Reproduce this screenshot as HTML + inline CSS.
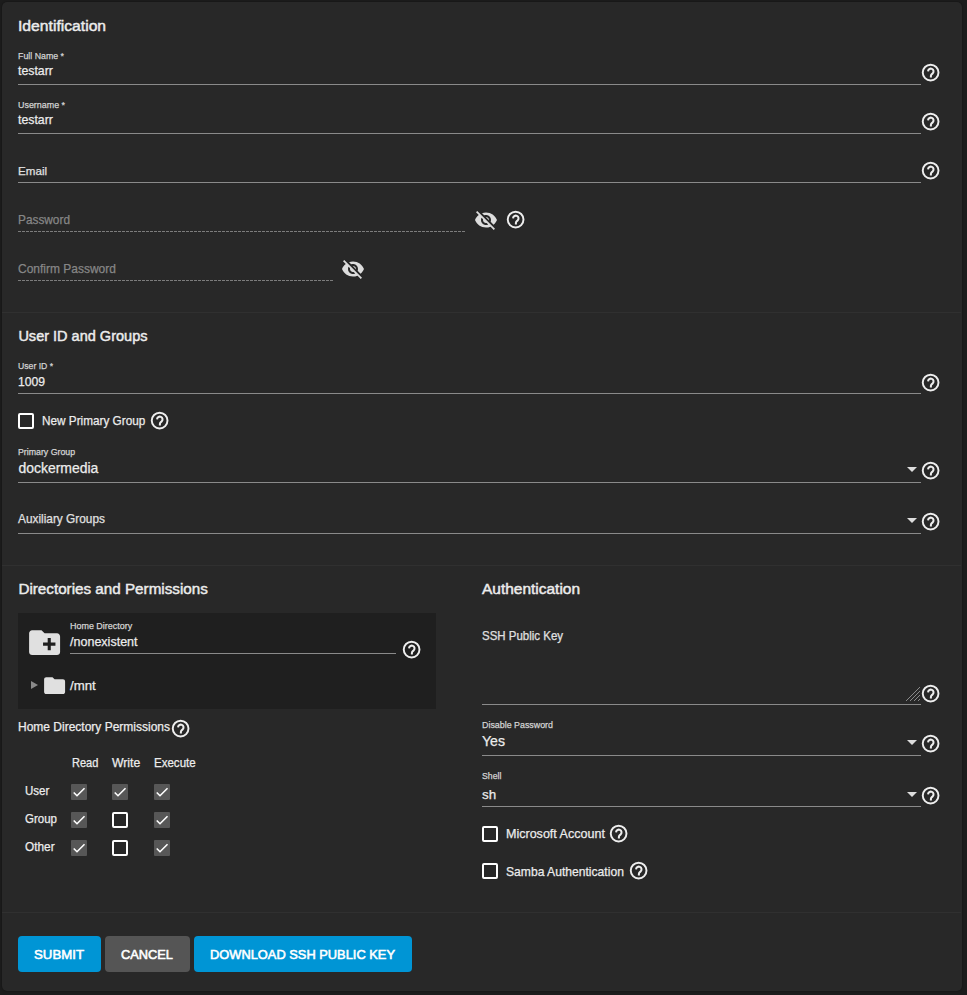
<!DOCTYPE html>
<html><head><meta charset="utf-8"><title>Add User</title>
<style>
html,body{margin:0;padding:0;}
body{width:967px;height:995px;background:#1c1c1c;position:relative;overflow:hidden;font-family:"Liberation Sans",sans-serif;}
.card{position:absolute;left:2px;top:2px;width:960px;height:989px;background:#282828;border-radius:5px;box-shadow:0 0 2px rgba(0,0,0,.5);}
.t{position:absolute;white-space:nowrap;line-height:1;transform-origin:0 0;}
.r{position:absolute;}
</style></head><body>
<div class="card"></div>
<div class="t" style="left:18.40px;top:18.11px;font-size:15.22px;color:#ececec;-webkit-text-stroke:0.45px currentColor;transform:scaleX(1.0310);">Identification</div>
<div class="t" style="left:18.40px;top:50.72px;font-size:9.78px;color:#d4d4d4;-webkit-text-stroke:0.25px currentColor;transform:scaleX(0.9028);">Full Name *</div>
<div class="t" style="left:18.20px;top:64.22px;font-size:13.68px;color:#ececec;-webkit-text-stroke:0.25px currentColor;transform:scaleX(0.8992);">testarr</div>
<div class="r" style="left:18px;top:84px;width:903px;height:1px;background:#8a8a8a;"></div>
<svg class="r" style="left:920.48px;top:62.43px;width:21.24px;height:21.24px" viewBox="0 0 24 24"><g fill="none" stroke="#eee"><circle cx="12" cy="12" r="8.9" stroke-width="2.2"/><path d="M9.1 10.6A3.1 3.1 0 1 1 14.3 12.9C13.1 13.9 12.3 14.4 12.3 15.9V17.6" stroke-width="2.3"/></g></svg>
<div class="t" style="left:18.40px;top:99.72px;font-size:9.78px;color:#d4d4d4;-webkit-text-stroke:0.25px currentColor;transform:scaleX(0.9126);">Username *</div>
<div class="t" style="left:18.20px;top:113.42px;font-size:13.68px;color:#ececec;-webkit-text-stroke:0.25px currentColor;transform:scaleX(0.8992);">testarr</div>
<div class="r" style="left:18px;top:133px;width:903px;height:1px;background:#8a8a8a;"></div>
<svg class="r" style="left:920.48px;top:111.43px;width:21.24px;height:21.24px" viewBox="0 0 24 24"><g fill="none" stroke="#eee"><circle cx="12" cy="12" r="8.9" stroke-width="2.2"/><path d="M9.1 10.6A3.1 3.1 0 1 1 14.3 12.9C13.1 13.9 12.3 14.4 12.3 15.9V17.6" stroke-width="2.3"/></g></svg>
<div class="t" style="left:18.40px;top:165.07px;font-size:11.73px;color:#e0e0e0;-webkit-text-stroke:0.25px currentColor;transform:scaleX(0.9915);">Email</div>
<div class="r" style="left:18px;top:182px;width:903px;height:1px;background:#8a8a8a;"></div>
<svg class="r" style="left:920.48px;top:160.43px;width:21.24px;height:21.24px" viewBox="0 0 24 24"><g fill="none" stroke="#eee"><circle cx="12" cy="12" r="8.9" stroke-width="2.2"/><path d="M9.1 10.6A3.1 3.1 0 1 1 14.3 12.9C13.1 13.9 12.3 14.4 12.3 15.9V17.6" stroke-width="2.3"/></g></svg>
<div class="t" style="left:18.40px;top:213.51px;font-size:12.15px;color:#868686;-webkit-text-stroke:0.25px currentColor;transform:scaleX(0.9747);">Password</div>
<div class="r" style="left:18px;top:231px;width:448px;height:1px;background:repeating-linear-gradient(to right,#7c7c7c 0 3px,transparent 3px 4px);"></div>
<svg class="r" style="left:473.70px;top:207.90px;width:24.00px;height:24.00px" viewBox="0 0 24 24"><path fill="#ddd" d="M12 7c2.76 0 5 2.24 5 5 0 .65-.13 1.26-.36 1.83l2.92 2.92c1.51-1.26 2.7-2.89 3.43-4.75-1.73-4.39-6-7.5-10.99-7.5-1.4 0-2.74.25-3.98.7l2.16 2.16C10.74 7.13 11.35 7 12 7zM2 4.27l2.28 2.28.46.46C3.08 8.3 1.78 10.02 1 12c1.73 4.39 6 7.5 11 7.5 1.55 0 3.03-.3 4.38-.84l.42.42L19.73 22 21 20.73 3.27 3 2 4.27zM7.53 9.8l1.55 1.55c-.05.21-.08.43-.08.65 0 1.66 1.34 3 3 3 .22 0 .44-.03.65-.08l1.55 1.55c-.67.33-1.41.53-2.2.53-2.76 0-5-2.24-5-5 0-.79.2-1.53.53-2.2zm4.31-.78l3.15 3.15.02-.16c0-1.66-1.34-3-3-3l-.17.01z"/></svg>
<svg class="r" style="left:505.48px;top:209.43px;width:21.24px;height:21.24px" viewBox="0 0 24 24"><g fill="none" stroke="#eee"><circle cx="12" cy="12" r="8.9" stroke-width="2.2"/><path d="M9.1 10.6A3.1 3.1 0 1 1 14.3 12.9C13.1 13.9 12.3 14.4 12.3 15.9V17.6" stroke-width="2.3"/></g></svg>
<div class="t" style="left:18.40px;top:262.71px;font-size:12.15px;color:#868686;-webkit-text-stroke:0.25px currentColor;transform:scaleX(0.9874);">Confirm Password</div>
<div class="r" style="left:18px;top:280px;width:315px;height:1px;background:repeating-linear-gradient(to right,#7c7c7c 0 3px,transparent 3px 4px);"></div>
<svg class="r" style="left:341.00px;top:257.00px;width:24.00px;height:24.00px" viewBox="0 0 24 24"><path fill="#ddd" d="M12 7c2.76 0 5 2.24 5 5 0 .65-.13 1.26-.36 1.83l2.92 2.92c1.51-1.26 2.7-2.89 3.43-4.75-1.73-4.39-6-7.5-10.99-7.5-1.4 0-2.74.25-3.98.7l2.16 2.16C10.74 7.13 11.35 7 12 7zM2 4.27l2.28 2.28.46.46C3.08 8.3 1.78 10.02 1 12c1.73 4.39 6 7.5 11 7.5 1.55 0 3.03-.3 4.38-.84l.42.42L19.73 22 21 20.73 3.27 3 2 4.27zM7.53 9.8l1.55 1.55c-.05.21-.08.43-.08.65 0 1.66 1.34 3 3 3 .22 0 .44-.03.65-.08l1.55 1.55c-.67.33-1.41.53-2.2.53-2.76 0-5-2.24-5-5 0-.79.2-1.53.53-2.2zm4.31-.78l3.15 3.15.02-.16c0-1.66-1.34-3-3-3l-.17.01z"/></svg>
<div class="r" style="left:2px;top:312px;width:959px;height:1px;background:#303030;"></div>
<div class="t" style="left:18.40px;top:328.80px;font-size:14.53px;color:#ececec;-webkit-text-stroke:0.45px currentColor;">User ID and Groups</div>
<div class="t" style="left:18.40px;top:361.14px;font-size:9.64px;color:#d4d4d4;-webkit-text-stroke:0.25px currentColor;transform:scaleX(0.8986);">User ID *</div>
<div class="t" style="left:18.40px;top:375.10px;font-size:12.99px;color:#ececec;-webkit-text-stroke:0.25px currentColor;transform:scaleX(0.9375);">1009</div>
<div class="r" style="left:18px;top:393px;width:903px;height:1px;background:#8a8a8a;"></div>
<svg class="r" style="left:920.48px;top:372.43px;width:21.24px;height:21.24px" viewBox="0 0 24 24"><g fill="none" stroke="#eee"><circle cx="12" cy="12" r="8.9" stroke-width="2.2"/><path d="M9.1 10.6A3.1 3.1 0 1 1 14.3 12.9C13.1 13.9 12.3 14.4 12.3 15.9V17.6" stroke-width="2.3"/></g></svg>
<div class="r" style="left:18px;top:413px;width:12px;height:12px;border:2px solid #fff;border-radius:2px"></div>
<div class="t" style="left:41.90px;top:414.20px;font-size:12.99px;color:#ececec;-webkit-text-stroke:0.25px currentColor;transform:scaleX(0.9059);">New Primary Group</div>
<svg class="r" style="left:148.88px;top:410.43px;width:21.24px;height:21.24px" viewBox="0 0 24 24"><g fill="none" stroke="#eee"><circle cx="12" cy="12" r="8.9" stroke-width="2.2"/><path d="M9.1 10.6A3.1 3.1 0 1 1 14.3 12.9C13.1 13.9 12.3 14.4 12.3 15.9V17.6" stroke-width="2.3"/></g></svg>
<div class="t" style="left:18.40px;top:447.57px;font-size:8.66px;color:#d4d4d4;-webkit-text-stroke:0.25px currentColor;transform:scaleX(1.0133);">Primary Group</div>
<div class="t" style="left:18.40px;top:461.87px;font-size:13.97px;color:#ececec;-webkit-text-stroke:0.25px currentColor;">dockermedia</div>
<div class="r" style="left:18px;top:482px;width:903px;height:1px;background:#8a8a8a;"></div>
<div class="r" style="left:907px;top:467px;width:0;height:0;border-left:5px solid transparent;border-right:5px solid transparent;border-top:5px solid #ddd"></div>
<svg class="r" style="left:920.48px;top:459.93px;width:21.24px;height:21.24px" viewBox="0 0 24 24"><g fill="none" stroke="#eee"><circle cx="12" cy="12" r="8.9" stroke-width="2.2"/><path d="M9.1 10.6A3.1 3.1 0 1 1 14.3 12.9C13.1 13.9 12.3 14.4 12.3 15.9V17.6" stroke-width="2.3"/></g></svg>
<div class="t" style="left:18.40px;top:513.41px;font-size:12.15px;color:#e0e0e0;-webkit-text-stroke:0.25px currentColor;transform:scaleX(0.9759);">Auxiliary Groups</div>
<div class="r" style="left:18px;top:533px;width:903px;height:1px;background:#8a8a8a;"></div>
<div class="r" style="left:907px;top:518px;width:0;height:0;border-left:5px solid transparent;border-right:5px solid transparent;border-top:5px solid #ddd"></div>
<svg class="r" style="left:920.48px;top:510.93px;width:21.24px;height:21.24px" viewBox="0 0 24 24"><g fill="none" stroke="#eee"><circle cx="12" cy="12" r="8.9" stroke-width="2.2"/><path d="M9.1 10.6A3.1 3.1 0 1 1 14.3 12.9C13.1 13.9 12.3 14.4 12.3 15.9V17.6" stroke-width="2.3"/></g></svg>
<div class="r" style="left:2px;top:565px;width:959px;height:1px;background:#303030;"></div>
<div class="t" style="left:18.40px;top:581.21px;font-size:15.22px;color:#ececec;-webkit-text-stroke:0.45px currentColor;">Directories and Permissions</div>
<div class="r" style="left:18px;top:613px;width:418px;height:96px;background:#1f1f1f;"></div>
<svg class="r" style="left:26.40px;top:624.40px;width:37.20px;height:37.20px" viewBox="0 0 24 24"><path fill="#e0e0e0" d="M20 6h-8l-2-2H4c-1.11 0-1.99.89-1.99 2L2 18c0 1.11.89 2 2 2h16c1.11 0 2-.89 2-2V8c0-1.11-.89-2-2-2zm-1 8h-3v3h-2v-3h-3v-2h3V9h2v3h3v2z"/></svg>
<div class="t" style="left:70.40px;top:621.14px;font-size:9.64px;color:#d4d4d4;-webkit-text-stroke:0.25px currentColor;transform:scaleX(0.9295);">Home Directory</div>
<div class="t" style="left:70.40px;top:634.50px;font-size:12.99px;color:#ececec;-webkit-text-stroke:0.25px currentColor;transform:scaleX(0.9649);">/nonexistent</div>
<div class="r" style="left:70px;top:653px;width:326px;height:1px;background:#8a8a8a;"></div>
<svg class="r" style="left:401.48px;top:639.43px;width:21.24px;height:21.24px" viewBox="0 0 24 24"><g fill="none" stroke="#eee"><circle cx="12" cy="12" r="8.9" stroke-width="2.2"/><path d="M9.1 10.6A3.1 3.1 0 1 1 14.3 12.9C13.1 13.9 12.3 14.4 12.3 15.9V17.6" stroke-width="2.3"/></g></svg>
<div class="r" style="left:31px;top:681px;width:0;height:0;border-top:4px solid transparent;border-bottom:4px solid transparent;border-left:7px solid #8a8a8a"></div>
<svg class="r" style="left:42.30px;top:672.50px;width:25.20px;height:25.20px" viewBox="0 0 24 24"><path fill="#e0e0e0" d="M10 4H4c-1.1 0-1.99.9-1.99 2L2 18c0 1.1.9 2 2 2h16c1.1 0 2-.9 2-2V8c0-1.1-.9-2-2-2h-8l-2-2z"/></svg>
<div class="t" style="left:70.40px;top:678.85px;font-size:13.41px;color:#ececec;-webkit-text-stroke:0.25px currentColor;transform:scaleX(0.9866);">/mnt</div>
<div class="t" style="left:18.20px;top:721.29px;font-size:12.29px;color:#ececec;-webkit-text-stroke:0.25px currentColor;transform:scaleX(0.9768);">Home Directory Permissions</div>
<svg class="r" style="left:169.98px;top:717.93px;width:21.24px;height:21.24px" viewBox="0 0 24 24"><g fill="none" stroke="#eee"><circle cx="12" cy="12" r="8.9" stroke-width="2.2"/><path d="M9.1 10.6A3.1 3.1 0 1 1 14.3 12.9C13.1 13.9 12.3 14.4 12.3 15.9V17.6" stroke-width="2.3"/></g></svg>
<div class="t" style="left:71.50px;top:756.61px;font-size:12.15px;color:#ececec;-webkit-text-stroke:0.25px currentColor;transform:scaleX(0.9088);">Read</div>
<div class="t" style="left:112.00px;top:756.61px;font-size:12.15px;color:#ececec;-webkit-text-stroke:0.25px currentColor;transform:scaleX(1.0053);">Write</div>
<div class="t" style="left:154.40px;top:756.61px;font-size:12.15px;color:#ececec;-webkit-text-stroke:0.25px currentColor;transform:scaleX(0.9499);">Execute</div>
<div class="t" style="left:24.80px;top:784.81px;font-size:12.15px;color:#ececec;-webkit-text-stroke:0.25px currentColor;transform:scaleX(0.9474);">User</div>
<div class="t" style="left:24.80px;top:812.61px;font-size:12.15px;color:#ececec;-webkit-text-stroke:0.25px currentColor;transform:scaleX(0.9452);">Group</div>
<div class="t" style="left:24.80px;top:840.71px;font-size:12.15px;color:#ececec;-webkit-text-stroke:0.25px currentColor;transform:scaleX(0.9770);">Other</div>
<svg class="r" style="left:71px;top:784px;width:16px;height:16px" viewBox="0 0 16 16"><rect x="0" y="0" width="16" height="16" rx="1" fill="#575757"/><path d="M2.73 8.47 6 11.73 13.53 4.2" fill="none" stroke="#fff" stroke-width="1.6"/></svg>
<svg class="r" style="left:112px;top:784px;width:16px;height:16px" viewBox="0 0 16 16"><rect x="0" y="0" width="16" height="16" rx="1" fill="#575757"/><path d="M2.73 8.47 6 11.73 13.53 4.2" fill="none" stroke="#fff" stroke-width="1.6"/></svg>
<svg class="r" style="left:154px;top:784px;width:16px;height:16px" viewBox="0 0 16 16"><rect x="0" y="0" width="16" height="16" rx="1" fill="#575757"/><path d="M2.73 8.47 6 11.73 13.53 4.2" fill="none" stroke="#fff" stroke-width="1.6"/></svg>
<svg class="r" style="left:71px;top:812px;width:16px;height:16px" viewBox="0 0 16 16"><rect x="0" y="0" width="16" height="16" rx="1" fill="#575757"/><path d="M2.73 8.47 6 11.73 13.53 4.2" fill="none" stroke="#fff" stroke-width="1.6"/></svg>
<div class="r" style="left:112px;top:812px;width:12px;height:12px;border:2px solid #fff;border-radius:2px"></div>
<svg class="r" style="left:154px;top:812px;width:16px;height:16px" viewBox="0 0 16 16"><rect x="0" y="0" width="16" height="16" rx="1" fill="#575757"/><path d="M2.73 8.47 6 11.73 13.53 4.2" fill="none" stroke="#fff" stroke-width="1.6"/></svg>
<svg class="r" style="left:71px;top:840px;width:16px;height:16px" viewBox="0 0 16 16"><rect x="0" y="0" width="16" height="16" rx="1" fill="#575757"/><path d="M2.73 8.47 6 11.73 13.53 4.2" fill="none" stroke="#fff" stroke-width="1.6"/></svg>
<div class="r" style="left:112px;top:840px;width:12px;height:12px;border:2px solid #fff;border-radius:2px"></div>
<svg class="r" style="left:154px;top:840px;width:16px;height:16px" viewBox="0 0 16 16"><rect x="0" y="0" width="16" height="16" rx="1" fill="#575757"/><path d="M2.73 8.47 6 11.73 13.53 4.2" fill="none" stroke="#fff" stroke-width="1.6"/></svg>
<div class="t" style="left:482.10px;top:581.79px;font-size:14.66px;color:#ececec;-webkit-text-stroke:0.45px currentColor;transform:scaleX(1.0555);">Authentication</div>
<div class="t" style="left:482.10px;top:629.93px;font-size:12.01px;color:#e0e0e0;-webkit-text-stroke:0.25px currentColor;transform:scaleX(0.9563);">SSH Public Key</div>
<div class="r" style="left:482px;top:704px;width:439px;height:1px;background:#8a8a8a;"></div>
<svg class="r" style="left:905px;top:686px;width:16px;height:16px" viewBox="0 0 16 16"><path d="M15 1 1 15M15 5 5 15M15 9 9 15M15 13 13 15" stroke="#8a8a8a" stroke-width="1" fill="none"/></svg>
<svg class="r" style="left:920.48px;top:683.43px;width:21.24px;height:21.24px" viewBox="0 0 24 24"><g fill="none" stroke="#eee"><circle cx="12" cy="12" r="8.9" stroke-width="2.2"/><path d="M9.1 10.6A3.1 3.1 0 1 1 14.3 12.9C13.1 13.9 12.3 14.4 12.3 15.9V17.6" stroke-width="2.3"/></g></svg>
<div class="t" style="left:482.10px;top:719.96px;font-size:9.5px;color:#d4d4d4;-webkit-text-stroke:0.25px currentColor;transform:scaleX(0.9336);">Disable Password</div>
<div class="t" style="left:482.10px;top:735.17px;font-size:13.97px;color:#ececec;-webkit-text-stroke:0.25px currentColor;transform:scaleX(1.0110);">Yes</div>
<div class="r" style="left:482px;top:755px;width:439px;height:1px;background:#8a8a8a;"></div>
<div class="r" style="left:907px;top:740px;width:0;height:0;border-left:5px solid transparent;border-right:5px solid transparent;border-top:5px solid #ddd"></div>
<svg class="r" style="left:920.48px;top:733.43px;width:21.24px;height:21.24px" viewBox="0 0 24 24"><g fill="none" stroke="#eee"><circle cx="12" cy="12" r="8.9" stroke-width="2.2"/><path d="M9.1 10.6A3.1 3.1 0 1 1 14.3 12.9C13.1 13.9 12.3 14.4 12.3 15.9V17.6" stroke-width="2.3"/></g></svg>
<div class="t" style="left:482.10px;top:771.57px;font-size:8.66px;color:#d4d4d4;-webkit-text-stroke:0.25px currentColor;">Shell</div>
<div class="t" style="left:482.10px;top:787.65px;font-size:13.41px;color:#ececec;-webkit-text-stroke:0.25px currentColor;">sh</div>
<div class="r" style="left:482px;top:806px;width:439px;height:1px;background:#8a8a8a;"></div>
<div class="r" style="left:907px;top:792px;width:0;height:0;border-left:5px solid transparent;border-right:5px solid transparent;border-top:5px solid #ddd"></div>
<svg class="r" style="left:920.48px;top:785.43px;width:21.24px;height:21.24px" viewBox="0 0 24 24"><g fill="none" stroke="#eee"><circle cx="12" cy="12" r="8.9" stroke-width="2.2"/><path d="M9.1 10.6A3.1 3.1 0 1 1 14.3 12.9C13.1 13.9 12.3 14.4 12.3 15.9V17.6" stroke-width="2.3"/></g></svg>
<div class="r" style="left:482px;top:826px;width:12px;height:12px;border:2px solid #fff;border-radius:2px"></div>
<div class="t" style="left:506.30px;top:827.30px;font-size:12.99px;color:#ececec;-webkit-text-stroke:0.25px currentColor;transform:scaleX(0.9648);">Microsoft Account</div>
<svg class="r" style="left:608.28px;top:823.03px;width:21.24px;height:21.24px" viewBox="0 0 24 24"><g fill="none" stroke="#eee"><circle cx="12" cy="12" r="8.9" stroke-width="2.2"/><path d="M9.1 10.6A3.1 3.1 0 1 1 14.3 12.9C13.1 13.9 12.3 14.4 12.3 15.9V17.6" stroke-width="2.3"/></g></svg>
<div class="r" style="left:482px;top:863px;width:12px;height:12px;border:2px solid #fff;border-radius:2px"></div>
<div class="t" style="left:506.30px;top:864.50px;font-size:12.99px;color:#ececec;-webkit-text-stroke:0.25px currentColor;transform:scaleX(0.9333);">Samba Authentication</div>
<svg class="r" style="left:627.88px;top:860.23px;width:21.24px;height:21.24px" viewBox="0 0 24 24"><g fill="none" stroke="#eee"><circle cx="12" cy="12" r="8.9" stroke-width="2.2"/><path d="M9.1 10.6A3.1 3.1 0 1 1 14.3 12.9C13.1 13.9 12.3 14.4 12.3 15.9V17.6" stroke-width="2.3"/></g></svg>
<div class="r" style="left:2px;top:912px;width:959px;height:1px;background:#303030;"></div>
<div class="r" style="left:18px;top:936px;width:83px;height:36px;background:#0095d5;border-radius:4px;"></div>
<div class="r" style="left:105px;top:936px;width:85px;height:36px;background:#555555;border-radius:4px;"></div>
<div class="r" style="left:194px;top:936px;width:218px;height:36px;background:#0095d5;border-radius:4px;"></div>
<div class="t" style="left:34.00px;top:947.93px;font-size:13.55px;color:#fff;-webkit-text-stroke:0.6px currentColor;transform:scaleX(0.9766);">SUBMIT</div>
<div class="t" style="left:121.20px;top:947.93px;font-size:13.55px;color:#fff;-webkit-text-stroke:0.6px currentColor;transform:scaleX(0.9463);">CANCEL</div>
<div class="t" style="left:210.20px;top:947.93px;font-size:13.55px;color:#fff;-webkit-text-stroke:0.6px currentColor;transform:scaleX(0.9487);">DOWNLOAD SSH PUBLIC KEY</div>
</body></html>
